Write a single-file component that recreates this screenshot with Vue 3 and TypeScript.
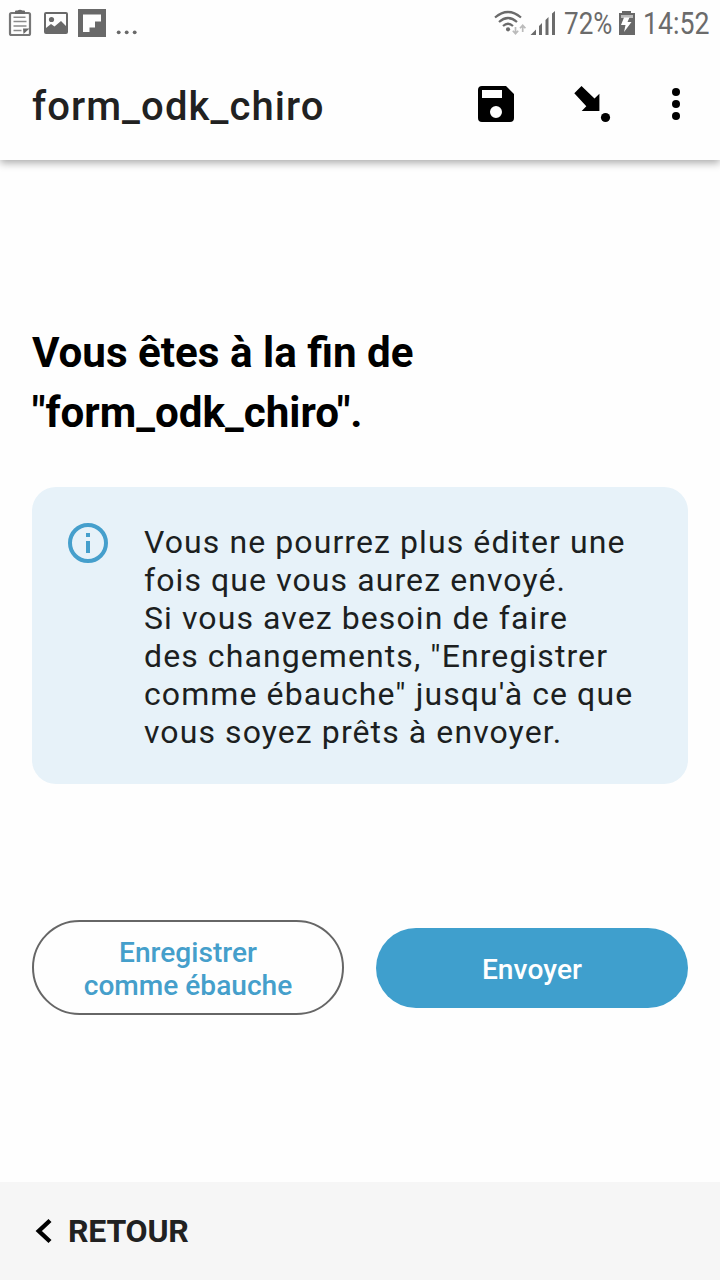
<script setup lang="ts">
const notice: string[] = [
  'Vous ne pourrez plus éditer une',
  'fois que vous aurez envoyé.',
  'Si vous avez besoin de faire',
  'des changements, "Enregistrer',
  'comme ébauche" jusqu\'à ce que',
  'vous soyez prêts à envoyer.',
]
const formName = 'form_odk_chiro'
</script>

<template>
  <div class="screen">
    <header class="top">
      <div class="status">
        <svg class="status-left" width="144" height="48" viewBox="0 0 144 48" fill="#696969">
          <rect x="10" y="13" width="20" height="22" rx="1.5" fill="none" stroke="#777" stroke-width="2.200" />
          <path d="M15 11.500q0-1 1-1h1.500q2.500-1.500 5 0H24q1 0 1 1V14H15z" />
          <path d="M13.500 17.200h12M13.500 21.500h13M13.500 26h13M13.500 30.500h8" stroke="#8a8a8a" stroke-width="1.400" fill="none" />
          <path d="M23 28.500h6.500L23.500 34z" />
          <path fill-rule="evenodd" d="M46 12h20q2 0 2 2v18q0 2-2 2H46q-2 0-2-2V14q0-2 2-2zm0 2v14l5-4 3.500 2.500L61 21l5 5V14z" />
          <circle cx="51.500" cy="19.500" r="2.600" />
          <rect x="78" y="9" width="28" height="28" />
          <path d="M83 14.500h18v7h-6v6h-5.500v4.500H83z" fill="#fff" />
          <circle cx="118.700" cy="32.300" r="1.900" />
          <circle cx="126.700" cy="32.300" r="1.900" />
          <circle cx="134.700" cy="32.300" r="1.900" />
        </svg>
        <div class="status-right">
          <svg width="66" height="48" viewBox="494 0 66 48">
            <g fill="none" stroke="#6b6b6b" stroke-width="2.200">
              <path d="M495 17.500Q508 6.500 521 17.500" />
              <path d="M499 22Q508 14 517 22" />
              <path d="M503 26Q508 21.500 513 26" />
            </g>
            <circle cx="508" cy="29.300" r="2.100" fill="#6b6b6b" />
            <path d="M515.500 27v7M512.800 30.800l2.700 3 2.700-3M522.700 32v-7M520 28.200l2.700-3 2.700 3" fill="none" stroke="#bbb" stroke-width="1.700" />
            <path d="M530.500 35l5.500-5.500V35zM539 35v-9l3-3v12zM545.500 35V20l3-3v18zM552 35V13.500l3-2.500v24z" fill="#6b6b6b" />
          </svg>
          <span class="cond battery-text">72%</span>
          <svg class="battery" width="18" height="48" viewBox="618 0 18 48">
            <path d="M619 13h3v-2h9v2h4v22h-16z" fill="#686868" />
            <path d="M621 15h12v3h-12z" fill="#bbb" />
            <path d="M624 17.500h5.500L627.500 22h4L624 32l1.500-7H621z" fill="#fff" />
          </svg>
          <span class="cond clock">14:52</span>
        </div>
      </div>
      <div class="bar">
        <h1>{{ formName }}</h1>
        <svg width="260" height="112" viewBox="460 48 260 112">
          <path fill-rule="evenodd" d="M482 86h24l8 8v24q0 4-4 4h-28q-4 0-4-4V90q0-4 4-4zm0 4v8h20v-8zm14 16a6 6 0 1 0 0 12 6 6 0 0 0 0-12z" />
          <path d="M574.300 93.300l7.200-7.300 13 12.500 4.900-4.700V111h-17.700l4.600-4.700z" />
          <circle cx="605.500" cy="117.500" r="4.600" />
          <circle cx="676" cy="92" r="4" />
          <circle cx="676" cy="104" r="4" />
          <circle cx="676" cy="116" r="4" />
        </svg>
      </div>
    </header>

    <main>
      <h2>Vous êtes à la fin de<br />"{{ formName }}".</h2>
      <section class="notice">
        <svg width="40" height="40" viewBox="0 0 40 40">
          <circle cx="20" cy="20" r="18" fill="none" stroke="#459fcc" stroke-width="4" />
          <path d="M18 10h4v4h-4zM18 18h4v12h-4z" fill="#459fcc" />
        </svg>
        <p>
          <span v-for="line in notice" :key="line">{{ line }}</span>
        </p>
      </section>
      <div class="actions">
        <button class="draft">Enregistrer<br />comme ébauche</button>
        <button class="send">Envoyer</button>
      </div>
    </main>

    <footer>
      <svg width="20" height="28" viewBox="34 1217 20 28">
        <path d="M50 1220.500L38.800 1231 50 1241.500" fill="none" stroke="#000" stroke-width="4.400" />
      </svg>
      <span>RETOUR</span>
    </footer>
  </div>
</template>

<style>
body {
  margin: 0;
  background: #fefefe;
}
</style>

<style scoped>
.screen {
  width: 720px;
  height: 1280px;
  display: flex;
  flex-direction: column;
  overflow: hidden;
  background: #fefefe;
  font-family: Roboto, "Liberation Sans", sans-serif;
}
svg {
  display: block;
  flex: none;
}
.top {
  height: 160px;
  flex: none;
  background: #fefefe;
  box-shadow: 0 3px 8px rgba(0, 0, 0, 0.33);
}
.status {
  height: 48px;
  display: flex;
  justify-content: space-between;
}
.status-right {
  display: flex;
  width: 226px;
}
.cond {
  display: block;
  font-size: 31px;
  line-height: 48px;
  color: #6b6b6b;
  white-space: nowrap;
  transform-origin: 0 50%;
  transform: scaleX(0.84);
}
.battery-text {
  width: 50px;
  margin-left: 4px;
}
.battery {
  margin-left: 4px;
}
.clock {
  width: 68px;
  margin-left: 7px;
  transform: scaleX(0.86);
}
.bar {
  height: 112px;
  display: flex;
  justify-content: space-between;
  padding-left: 32px;
}
h1 {
  margin: 0;
  font-size: 40px;
  font-weight: 500;
  line-height: 118px;
  letter-spacing: 1.08px;
  color: #212121;
}
main {
  flex: 1;
  padding: 163px 32px 0;
}
h2 {
  margin: 0;
  font-size: 42.15px;
  font-weight: 700;
  line-height: 60px;
  color: #000;
  white-space: nowrap;
}
.notice {
  box-sizing: border-box;
  height: 297px;
  margin-top: 44px;
  padding: 36px;
  display: flex;
  gap: 36px;
  border-radius: 24px;
  background: #e7f2f9;
}
.notice p {
  margin: 0;
  font-size: 32px;
  line-height: 38px;
  letter-spacing: 1.09px;
  color: #1c1f21;
}
.notice span {
  display: block;
  white-space: nowrap;
}
.actions {
  display: flex;
  align-items: center;
  gap: 32px;
  margin-top: 136px;
}
button {
  box-sizing: border-box;
  width: 312px;
  padding: 2px 0 0;
  font: 500 28.1px/33px Roboto, "Liberation Sans", sans-serif;
}
.draft {
  height: 95px;
  border: 2px solid #666;
  border-radius: 48px;
  background: #fefefe;
  color: #459fcb;
}
.send {
  height: 80px;
  padding-top: 3px;
  border: 0;
  border-radius: 40px;
  background: #3f9fcd;
  color: #fff;
  letter-spacing: 0.1px;
}
footer {
  height: 98px;
  flex: none;
  display: flex;
  align-items: center;
  gap: 14px;
  padding-left: 34px;
  box-sizing: border-box;
  background: #f6f6f6;
  color: #212121;
  font-size: 32px;
  font-weight: 700;
  letter-spacing: -0.2px;
}
</style>
